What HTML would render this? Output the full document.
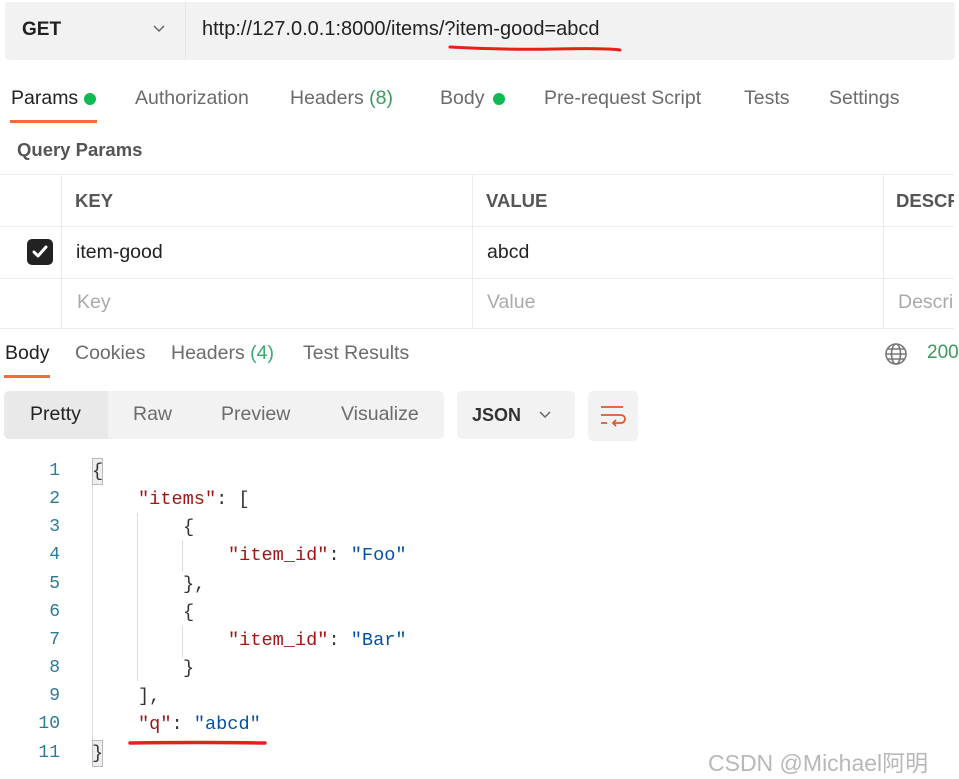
<!DOCTYPE html>
<html><head><meta charset="utf-8"><style>
*{margin:0;padding:0;box-sizing:border-box}
html,body{width:959px;height:779px;overflow:hidden}
body{background:#fff;position:relative;font-family:"Liberation Sans",sans-serif;color:#212121}
#w{position:absolute;left:0;top:0;width:959px;height:779px;overflow:hidden}
.a{position:absolute;white-space:nowrap}
.t{font-size:19.5px;color:#6b6b6b}
.mono{font-family:"Liberation Mono",monospace;font-size:18.6px}
.ln{position:absolute;left:20px;width:40px;text-align:right;color:#2a7a9a;font-family:"Liberation Mono",monospace;font-size:18px}
.k{color:#a31515}.s{color:#0451a5}.p{color:#333}
.hl{position:absolute;height:1px;background:#ececec}
.vl{position:absolute;width:1px;background:#ececec}
</style></head><body><div id="w">
<div class="a" style="left:5px;top:2px;width:950px;height:58px;background:#f2f2f2;border-radius:4px"></div>
<div class="a" style="left:185px;top:2px;width:1px;height:58px;background:#e4e4e4"></div>
<div class="a" style="left:22px;top:19px;font-size:19px;font-weight:bold;color:#222">GET</div>
<svg class="a" style="left:152px;top:24px" width="14" height="10"><path d="M2 2l5 5 5-5" stroke="#666" stroke-width="1.5" fill="none"/></svg>
<div class="a" style="left:202px;top:18px;font-size:20px;color:#222">http://127.0.0.1:8000/items/?item-good=abcd</div>
<svg class="a" style="left:445px;top:42px" width="180" height="12"><path d="M5 5 Q60 8 110 7 T175 8" stroke="#e8201a" stroke-width="3" fill="none" stroke-linecap="round"/></svg>

<div class="a t" style="left:11px;top:87px;color:#222">Params</div>
<div class="a" style="left:84px;top:93px;width:12px;height:12px;border-radius:50%;background:#0cbb52"></div>
<div class="a" style="left:10px;top:120px;width:87px;height:3px;background:#f26b3a"></div>
<div class="a t" style="left:135px;top:87px">Authorization</div>
<div class="a t" style="left:290px;top:87px">Headers <span style="color:#3a9a5a">(8)</span></div>
<div class="a t" style="left:440px;top:87px">Body</div>
<div class="a" style="left:493px;top:93px;width:12px;height:12px;border-radius:50%;background:#0cbb52"></div>
<div class="a t" style="left:544px;top:87px">Pre-request Script</div>
<div class="a t" style="left:744px;top:87px">Tests</div>
<div class="a t" style="left:829px;top:87px">Settings</div>
<div class="a" style="left:17px;top:139px;font-size:18.5px;font-weight:bold;color:#555">Query Params</div>

<div class="hl" style="left:0;top:174px;width:954px"></div>
<div class="hl" style="left:0;top:226px;width:954px"></div>
<div class="hl" style="left:0;top:278px;width:954px"></div>
<div class="hl" style="left:0;top:328px;width:954px"></div>
<div class="vl" style="left:61px;top:174px;height:154px"></div>
<div class="vl" style="left:472px;top:174px;height:154px"></div>
<div class="vl" style="left:883px;top:174px;height:154px"></div>
<div class="a" style="left:75px;top:190px;font-size:18.5px;font-weight:bold;color:#555">KEY</div>
<div class="a" style="left:486px;top:190px;font-size:18.5px;font-weight:bold;color:#555">VALUE</div>
<div class="a" style="left:896px;top:190px;width:58px;overflow:hidden;font-size:18.5px;font-weight:bold;color:#555">DESCRIPTION</div>
<div class="a" style="left:27px;top:239px;width:26px;height:26px;border-radius:5px;background:#222"></div>
<svg class="a" style="left:27px;top:239px" width="26" height="26"><path d="M7 13l4 4 8-9" stroke="#fff" stroke-width="3" fill="none" stroke-linecap="round" stroke-linejoin="round"/></svg>
<div class="a" style="left:76px;top:241px;font-size:19.5px;color:#222">item-good</div>
<div class="a" style="left:487px;top:241px;font-size:19.5px;color:#222">abcd</div>
<div class="a" style="left:77px;top:291px;font-size:19.5px;color:#aaa">Key</div>
<div class="a" style="left:487px;top:291px;font-size:19.5px;color:#aaa">Value</div>
<div class="a" style="left:898px;top:291px;width:56px;overflow:hidden;font-size:19.5px;color:#aaa">Description</div>

<div class="a t" style="left:5px;top:342px;color:#222">Body</div>
<div class="a" style="left:4px;top:375px;width:46px;height:3px;background:#f26b3a"></div>
<div class="a t" style="left:75px;top:342px">Cookies</div>
<div class="a t" style="left:171px;top:342px">Headers <span style="color:#3aaa6a">(4)</span></div>
<div class="a t" style="left:303px;top:342px">Test Results</div>
<svg class="a" style="left:884px;top:342px" width="24" height="24" fill="none" stroke="#777" stroke-width="1.6"><circle cx="12" cy="12" r="10"/><ellipse cx="12" cy="12" rx="4.5" ry="10"/><path d="M2 12h20M4 7h16M4 17h16"/></svg>
<div class="a" style="left:927px;top:342px;width:32px;overflow:hidden;font-size:19px;color:#3a9a5a">200 OK</div>

<div class="a" style="left:4px;top:391px;width:440px;height:48px;background:#f2f2f2;border-radius:5px"></div>
<div class="a" style="left:4px;top:391px;width:104px;height:48px;background:#e9e9e9;border-radius:5px 0 0 5px"></div>
<div class="a" style="left:30px;top:403px;font-size:19.5px;color:#222">Pretty</div>
<div class="a t" style="left:133px;top:403px">Raw</div>
<div class="a t" style="left:221px;top:403px">Preview</div>
<div class="a t" style="left:341px;top:403px">Visualize</div>
<div class="a" style="left:457px;top:391px;width:118px;height:48px;background:#f2f2f2;border-radius:5px"></div>
<div class="a" style="left:472px;top:405px;font-size:18px;font-weight:bold;color:#333">JSON</div>
<svg class="a" style="left:538px;top:410px" width="14" height="10"><path d="M2 2l5 5 5-5" stroke="#666" stroke-width="1.5" fill="none"/></svg>
<div class="a" style="left:588px;top:391px;width:50px;height:50px;background:#f2f2f2;border-radius:5px"></div>
<svg class="a" style="left:598px;top:402px" width="30" height="28" fill="none" stroke="#e0582a" stroke-width="1.8"><path d="M3 5h22M3 13h20a4 4 0 0 1 0 8h-8M3 21h6M18 18l-3 3 3 3"/></svg>

<div class="ln" style="top:461px">1</div>
<div class="ln" style="top:489px">2</div>
<div class="ln" style="top:517px">3</div>
<div class="ln" style="top:545px">4</div>
<div class="ln" style="top:574px">5</div>
<div class="ln" style="top:602px">6</div>
<div class="ln" style="top:630px">7</div>
<div class="ln" style="top:658px">8</div>
<div class="ln" style="top:686px">9</div>
<div class="ln" style="top:714px">10</div>
<div class="ln" style="top:743px">11</div>
<div class="vl" style="left:92px;top:458px;height:308px;background:#ddd"></div>
<div class="vl" style="left:137px;top:513px;height:168px;background:#ddd"></div>
<div class="vl" style="left:182px;top:540px;height:32px;background:#ddd"></div>
<div class="vl" style="left:182px;top:626px;height:32px;background:#ddd"></div>
<div class="a" style="left:92px;top:458px;width:11px;height:27px;background:#eee;border:1px solid #bbb"></div>
<div class="a" style="left:92px;top:740px;width:11px;height:27px;background:#eee;border:1px solid #bbb"></div>
<div class="a mono p" style="left:92px;top:461px">{</div>
<div class="a mono" style="left:138px;top:489px"><span class="k">"items"</span><span class="p">: [</span></div>
<div class="a mono p" style="left:183px;top:517px">{</div>
<div class="a mono" style="left:228px;top:545px"><span class="k">"item_id"</span><span class="p">: </span><span class="s">"Foo"</span></div>
<div class="a mono p" style="left:183px;top:574px">},</div>
<div class="a mono p" style="left:183px;top:602px">{</div>
<div class="a mono" style="left:228px;top:630px"><span class="k">"item_id"</span><span class="p">: </span><span class="s">"Bar"</span></div>
<div class="a mono p" style="left:183px;top:658px">}</div>
<div class="a mono p" style="left:138px;top:686px">],</div>
<div class="a mono" style="left:138px;top:714px"><span class="k">"q"</span><span class="p">: </span><span class="s">"abcd"</span></div>
<div class="a mono p" style="left:92px;top:743px">}</div>
<svg class="a" style="left:125px;top:737px" width="150" height="12"><path d="M5 6 Q80 5 140 6" stroke="#e8201a" stroke-width="3.5" fill="none" stroke-linecap="round"/></svg>
<div class="a" style="left:708px;top:744px;font-size:23px;color:#b8b8b8;font-family:'Liberation Sans','Noto Sans CJK SC',sans-serif">CSDN @Michael阿明</div>
</div></body></html>
